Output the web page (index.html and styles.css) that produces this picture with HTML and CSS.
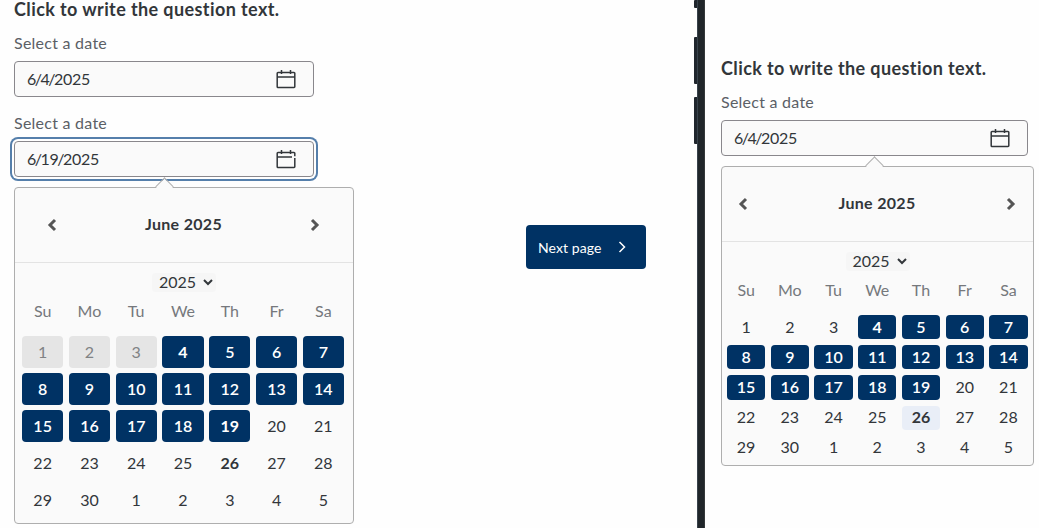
FILE: index.html
```html
<!DOCTYPE html>
<html lang="en">

<head>
    <meta charset="UTF-8">
    <meta name="viewport" content="width=device-width, initial-scale=1.0">
    <title>Survey preview</title>
    <link rel="stylesheet" href="styles.css">
</head>

<body>
    <!-- desktop preview -->
    <main class="desktop">
        <form class="question" action="">
            <h2 class="question_title">Click to write the question text.</h2>
            <label class="date_label">Select a date</label>
            <div class="date_field">
                <span class="date_value">6<span class="slash">/</span>4<span class="slash">/</span>2025</span>
                <svg class="date_icon" viewBox="0 0 20 20"><path d="M2 3.5h16a.8.8 0 0 1 .8.8v13.4a.8.8 0 0 1-.8.8H2a.8.8 0 0 1-.8-.8V4.3a.8.8 0 0 1 .8-.8zM1.2 8h17.6M5.5 1v4M14.5 1v4"/></svg>
            </div>
            <label class="date_label">Select a date</label>
            <div class="date_field focused">
                <span class="date_value">6<span class="slash">/</span>19<span class="slash">/</span>2025</span>
                <svg class="date_icon" viewBox="0 0 20 20"><path d="M18.8 9v8.7a.8.8 0 0 1-.8.8H2a.8.8 0 0 1-.8-.8V4.3a.8.8 0 0 1 .8-.8h16a.8.8 0 0 1 .8.8v3M1.2 8h14.8M5.5 1v4M14.5 1v4"/></svg>
            </div>

            <div class="calendar">
                <div class="calendar_arrow"></div>
                <div class="calendar_header">
                    <svg class="calendar_nav" viewBox="0 0 12 14"><path d="M9 2 4 7l5 5"/></svg>
                    <span class="calendar_month">June 2025</span>
                    <svg class="calendar_nav" viewBox="0 0 12 14"><path d="m3 2 5 5-5 5"/></svg>
                </div>
                <div class="calendar_year">
                    <span>2025</span>
                    <svg class="year_chevron" viewBox="0 0 10 8"><path d="m1 2 4 4 4-4"/></svg>
                </div>
                <div class="weekdays">
                    <span>Su</span><span>Mo</span><span>Tu</span><span>We</span><span>Th</span><span>Fr</span><span>Sa</span>
                </div>
                <div class="days">
                    <span class="day disabled">1</span>
                    <span class="day disabled">2</span>
                    <span class="day disabled">3</span>
                    <span class="day range edge">4</span>
                    <span class="day range">5</span>
                    <span class="day range">6</span>
                    <span class="day range">7</span>
                    <span class="day range">8</span>
                    <span class="day range">9</span>
                    <span class="day range">10</span>
                    <span class="day range">11</span>
                    <span class="day range">12</span>
                    <span class="day range">13</span>
                    <span class="day range">14</span>
                    <span class="day range">15</span>
                    <span class="day range">16</span>
                    <span class="day range">17</span>
                    <span class="day range">18</span>
                    <span class="day range edge">19</span>
                    <span class="day">20</span>
                    <span class="day">21</span>
                    <span class="day">22</span>
                    <span class="day">23</span>
                    <span class="day">24</span>
                    <span class="day">25</span>
                    <span class="day today">26</span>
                    <span class="day">27</span>
                    <span class="day">28</span>
                    <span class="day">29</span>
                    <span class="day">30</span>
                    <span class="day">1</span>
                    <span class="day">2</span>
                    <span class="day">3</span>
                    <span class="day">4</span>
                    <span class="day">5</span>
                </div>
            </div>
        </form>

        <button class="next" type="button">
            <span>Next page</span>
            <svg class="next_icon" viewBox="0 0 8 12"><path d="m1.5 1 5 5-5 5"/></svg>
        </button>
    </main>

    <!-- side of the phone with its buttons -->
    <div class="phone_buttons">
        <div class="phone_button short"></div>
        <div class="phone_button"></div>
        <div class="phone_button"></div>
    </div>
    <div class="phone_frame"></div>

    <!-- mobile preview -->
    <section class="mobile">
        <h2 class="question_title">Click to write the question text.</h2>
        <label class="date_label">Select a date</label>
        <div class="date_field">
            <span class="date_value">6<span class="slash">/</span>4<span class="slash">/</span>2025</span>
            <svg class="date_icon" viewBox="0 0 20 20"><path d="M2 3.5h16a.8.8 0 0 1 .8.8v13.4a.8.8 0 0 1-.8.8H2a.8.8 0 0 1-.8-.8V4.3a.8.8 0 0 1 .8-.8zM1.2 8h17.6M5.5 1v4M14.5 1v4"/></svg>
        </div>

        <div class="calendar compact">
            <div class="calendar_arrow"></div>
            <div class="calendar_header">
                <svg class="calendar_nav" viewBox="0 0 12 14"><path d="M9 2 4 7l5 5"/></svg>
                <span class="calendar_month">June 2025</span>
                <svg class="calendar_nav" viewBox="0 0 12 14"><path d="m3 2 5 5-5 5"/></svg>
            </div>
            <div class="calendar_year">
                <span>2025</span>
                <svg class="year_chevron" viewBox="0 0 10 8"><path d="m1 2 4 4 4-4"/></svg>
            </div>
            <div class="weekdays">
                <span>Su</span><span>Mo</span><span>Tu</span><span>We</span><span>Th</span><span>Fr</span><span>Sa</span>
            </div>
            <div class="days">
                <span class="day">1</span>
                <span class="day">2</span>
                <span class="day">3</span>
                <span class="day range edge">4</span>
                <span class="day range">5</span>
                <span class="day range">6</span>
                <span class="day range">7</span>
                <span class="day range">8</span>
                <span class="day range">9</span>
                <span class="day range">10</span>
                <span class="day range">11</span>
                <span class="day range">12</span>
                <span class="day range">13</span>
                <span class="day range">14</span>
                <span class="day range">15</span>
                <span class="day range">16</span>
                <span class="day range">17</span>
                <span class="day range">18</span>
                <span class="day range">19</span>
                <span class="day">20</span>
                <span class="day">21</span>
                <span class="day">22</span>
                <span class="day">23</span>
                <span class="day">24</span>
                <span class="day">25</span>
                <span class="day today hover">26</span>
                <span class="day">27</span>
                <span class="day">28</span>
                <span class="day">29</span>
                <span class="day">30</span>
                <span class="day">1</span>
                <span class="day">2</span>
                <span class="day">3</span>
                <span class="day">4</span>
                <span class="day">5</span>
            </div>
        </div>
    </section>
</body>

</html>
```
FILE: styles.css
```css
* {
    box-sizing: border-box;
}

body {
    margin: 0;
    height: 528px;
    display: flex;
    overflow: hidden;
    font-family: "Lato", "Open Sans", sans-serif;
    font-size: 16px;
    color: #32363a;
    background-color: #fefefe;
}

svg {
    fill: none;
    stroke: currentColor;
    flex: none;
}

.desktop {
    width: 694px;
    display: flex;
    align-items: flex-start;
    padding-left: 14px;
}

.question {
    width: 340px;
}

.question_title {
    margin: 0 0 16px;
    font-size: 18px;
    line-height: 18px;
    font-weight: 700;
    letter-spacing: 0.4px;
    white-space: nowrap;
}

.date_label {
    display: block;
    line-height: 18px;
    margin-bottom: 9px;
    letter-spacing: 0.25px;
    color: #5b6066;
}

.date_field {
    width: 300px;
    height: 36px;
    display: flex;
    align-items: center;
    justify-content: space-between;
    padding: 0 17px 0 12px;
    border: 1px solid #89878c;
    border-radius: 4px;
    background-color: #fafafa;
}

.date_field + .date_label {
    margin-top: 17px;
}

.date_field.focused {
    box-shadow: 0 0 0 2px #fff, 0 0 0 4px #557fab;
}

.date_value {
    padding-bottom: 2px;
    letter-spacing: -0.3px;
}

.slash {
    margin: 0 -1.2px;
}

.date_icon {
    width: 20px;
    height: 20px;
    stroke-width: 1.5;
}

.calendar {
    position: relative;
    width: 340px;
    height: 337px;
    margin-top: 10px;
    border: 1px solid #aeaeae;
    border-radius: 4px;
    background-color: #fafafa;
}

.calendar_arrow {
    position: absolute;
    top: -8px;
    left: 143px;
    width: 13px;
    height: 13px;
    border: 1px solid #aeaeae;
    border-right: 0;
    border-bottom: 0;
    background: linear-gradient(135deg, #fafafa 52%, transparent 52%);
    transform: rotate(45deg);
}

.calendar_header {
    height: 75px;
    display: flex;
    align-items: center;
    justify-content: space-between;
    padding: 0 32px 1px 31px;
    border-bottom: 1px solid #e3e3e3;
}

.calendar_month {
    padding-bottom: 2px;
    font-weight: 700;
    letter-spacing: 0.3px;
}

.calendar_nav {
    width: 12px;
    height: 14px;
    color: #555;
    stroke-width: 3;
}

.calendar_year {
    width: 64px;
    height: 19px;
    display: flex;
    align-items: center;
    justify-content: space-between;
    margin: 10px auto 0;
    padding: 0 3px 2px 7px;
    border-radius: 4px;
    background-color: #f6f6f6;
}

.year_chevron {
    width: 10px;
    height: 8px;
    stroke-width: 2;
}

.weekdays,
.days {
    display: grid;
    grid-template-columns: repeat(7, 1fr);
    column-gap: 5.5px;
    padding: 0 9px 0 7px;
    text-align: center;
}

.weekdays {
    margin-top: 9px;
    line-height: 20px;
    color: #75787c;
}

.days {
    margin-top: 15px;
    row-gap: 5.2px;
}

.day {
    height: 32px;
    display: flex;
    align-items: center;
    justify-content: center;
    padding-bottom: 2px;
    border-radius: 4px;
}

.day.disabled {
    color: #808284;
    background-color: #e5e5e5;
}

.day.range {
    color: #fff;
    font-weight: 600;
    background-color: #003264;
}

.day.range.edge,
.day.today {
    font-weight: 700;
}

.day.hover {
    background-color: #e9eef7;
}

.next {
    width: 120px;
    height: 44px;
    display: flex;
    align-items: center;
    justify-content: space-between;
    margin: 225px 0 0 172px;
    padding: 0 20px 0 12px;
    border: 0;
    border-radius: 4px;
    font-family: inherit;
    font-size: 14px;
    letter-spacing: 0.1px;
    color: #fff;
    background-color: #003264;
}

.next_icon {
    width: 8px;
    height: 12px;
    stroke-width: 1.5;
}

/* phone */
.phone_buttons {
    width: 3px;
    display: flex;
    flex-direction: column;
}

.phone_button {
    height: 47px;
    margin-bottom: 13px;
    border-radius: 1px 0 0 1px;
    background-color: #20262d;
}

.phone_button.short {
    height: 8px;
    margin-bottom: 29px;
}

.phone_frame {
    width: 8px;
    background-color: #20262a;
    border-left: 1px solid #39434c;
    border-right: 1px solid #34383a;
}

.mobile {
    width: 334px;
    padding: 59px 0 0 16px;
}

.mobile .date_field {
    width: 307px;
}

.calendar.compact {
    width: 313px;
    height: 300px;
}

.compact .calendar_arrow {
    left: 146px;
}

.compact .calendar_header {
    padding: 0 16px 1px 15px;
}

.compact .weekdays,
.compact .days {
    padding: 0 5.5px 0 5px;
}

.compact .days {
    row-gap: 6px;
}

.compact .day {
    height: 24.2px;
}
```
